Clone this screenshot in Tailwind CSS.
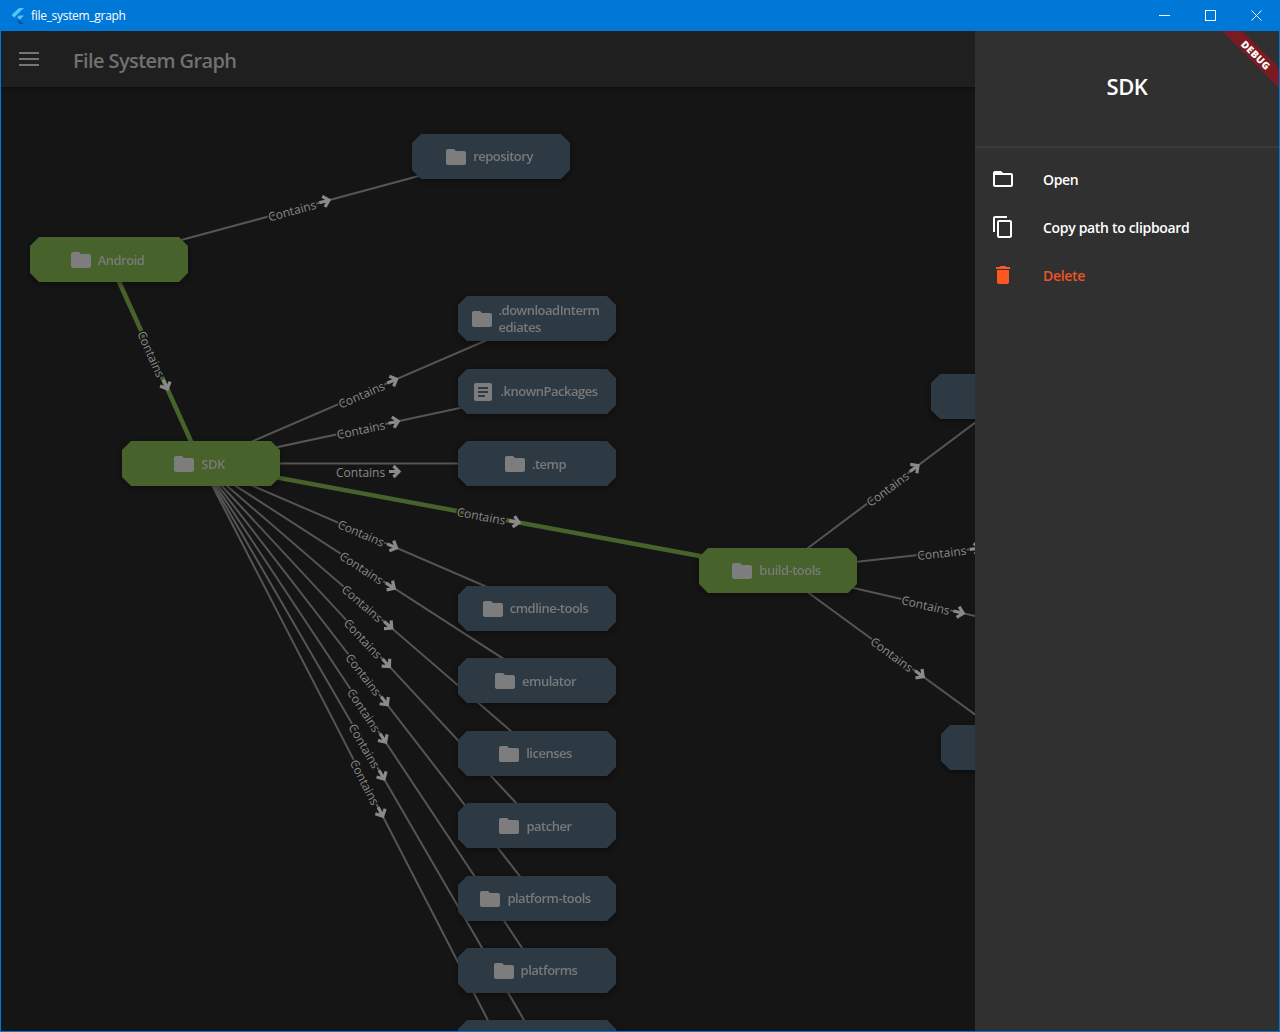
<!doctype html>
<html lang="en">
<head>
  <meta charset="UTF-8" />
  <title>file_system_graph</title>
  <script src="https://cdn.jsdelivr.net/npm/@tailwindcss/browser@4"></script>
</head>
<body class="h-[1032px] w-[1280px] overflow-hidden bg-[#0078d7] font-['Open_Sans','Noto_Sans',sans-serif]">
  <div class="flex h-full flex-col">

    <!-- Title bar -->
    <div class="flex h-[31px] shrink-0 items-center text-white">
      <svg class="ml-[10px] h-4 w-4" viewBox="0 0 16 16">
        <path d="M9 0h5L4.2 9.4 1.6 6.9z" fill="#54c5f8" />
        <path d="M9 7.5h5L9.5 12 7 9.5z" fill="#54c5f8" />
        <path d="M7 9.5 9.5 12 14 16H9z" fill="#01579b" />
      </svg>
      <span class="ml-[5px] text-[12px] tracking-[-0.3px]">file_system_graph</span>
      <div class="ml-auto flex items-center">
        <svg class="mr-[35px] h-[11px] w-[11px]" viewBox="0 0 11 11"><path d="M0 5.5h11" stroke="white" /></svg>
        <svg class="mr-[35px] h-[11px] w-[11px]" viewBox="0 0 11 11"><rect x=".5" y=".5" width="10" height="10" fill="none" stroke="white" /></svg>
        <svg class="mr-[18px] h-[11px] w-[11px]" viewBox="0 0 11 11"><path d="M.5.5l10 10M10.5.5l-10 10" stroke="white" /></svg>
      </div>
    </div>

    <div class="flex min-h-0 flex-1 pb-px pl-px pr-px">
      <!-- App bar and graph, dimmed by the open drawer -->
      <div class="relative flex w-[974px] shrink-0 flex-col overflow-hidden bg-[#151515]">
        <div class="relative z-10 flex h-14 shrink-0 items-center bg-[#1f1f1f] shadow-[0_2px_4px_rgba(0,0,0,0.3)]">
          <svg class="ml-[18px] h-[20px] w-[20px]" viewBox="0 0 20 20">
            <path d="M0 3h20v2H0zM0 9h20v2H0zM0 15h20v2H0z" fill="#757575" />
          </svg>
          <span class="ml-[34px] pt-[3px] text-[20px] font-semibold tracking-[-0.6px] text-[#717171]">File System Graph</span>
        </div>
        <div id="graph" class="relative flex-1"></div>
      </div>

      <!-- Drawer -->
      <div class="relative flex-1 overflow-hidden bg-[#303030] text-white">
        <div class="flex h-[117px] items-center justify-center border-b-2 border-[#3b3b3b] pb-[5px] text-[22px] font-semibold tracking-[-0.5px]">SDK</div>
        <ul class="pt-[7px] text-[14px] font-semibold tracking-[-0.32px]">
          <li class="flex h-12 items-center">
            <svg class="ml-[16px] h-6 w-6" viewBox="0 0 24 24" fill="white"><path d="M20 6h-8l-2-2H4c-1.1 0-2 .9-2 2v12c0 1.1.9 2 2 2h16c1.1 0 2-.9 2-2V8c0-1.1-.9-2-2-2zm0 12H4V8h16v10z" /></svg>
            <span class="ml-[28px]">Open</span>
          </li>
          <li class="flex h-12 items-center">
            <svg class="ml-[16px] h-6 w-6" viewBox="0 0 24 24" fill="white"><path d="M16 1H4c-1.1 0-2 .9-2 2v14h2V3h12V1zm3 4H8c-1.1 0-2 .9-2 2v14c0 1.1.9 2 2 2h11c1.1 0 2-.9 2-2V7c0-1.1-.9-2-2-2zm0 16H8V7h11v14z" /></svg>
            <span class="ml-[28px]">Copy path to clipboard</span>
          </li>
          <li class="flex h-12 items-center text-[#ea5527]">
            <svg class="ml-[16px] h-6 w-6" viewBox="0 0 24 24" fill="#ff5722"><path d="M6 19c0 1.1.9 2 2 2h8c1.1 0 2-.9 2-2V7H6v12zM19 4h-3.5l-1-1h-5l-1 1H5v2h14V4z" /></svg>
            <span class="ml-[28px]">Delete</span>
          </li>
        </ul>
        <!-- Debug ribbon -->
        <div class="absolute right-[-27px] top-[17px] flex h-[14px] w-[100px] rotate-45 items-center justify-center bg-[#7c1a22] text-[10px] font-extrabold tracking-[0.4px] text-white">DEBUG</div>
      </div>
    </div>
  </div>

  <script>
    // screen coordinates of the graph area
    const originX = 1;
    const originY = 87;
    const nodeW = 158;
    const nodeH = 45;

    const nodes = {
      repository: { x: 412, y: 134, label: "repository" },
      android: { x: 30, y: 237, label: "Android", green: true, low: true },
      sdk: { x: 122, y: 441, label: "SDK", green: true, low: true },
      download: { x: 458, y: 296, label: ".downloadInterm<br>ediates" },
      known: { x: 458, y: 369, label: ".knownPackages", file: true },
      temp: { x: 458, y: 441, label: ".temp", low: true },
      cmdline: { x: 458, y: 586, label: "cmdline-tools" },
      emulator: { x: 458, y: 658, label: "emulator", low: true },
      licenses: { x: 458, y: 731, label: "licenses" },
      patcher: { x: 458, y: 803, label: "patcher", low: true },
      platformTools: { x: 458, y: 876, label: "platform-tools" },
      platforms: { x: 458, y: 948, label: "platforms" },
      next1: { x: 458, y: 1020, label: "" },
      next2: { x: 458, y: 1093, label: "" },
      buildTools: { x: 699, y: 548, label: "build-tools", green: true },
      v1: { x: 931, y: 374, label: "" },
      v2: { x: 1043, y: 510, label: "" },
      v3: { x: 1011, y: 620, label: "" },
      v4: { x: 941, y: 725, label: "" },
    };

    const edges = [
      ["android", "repository"],
      ["android", "sdk", true],
      ["sdk", "download"],
      ["sdk", "known"],
      ["sdk", "temp"],
      ["sdk", "cmdline"],
      ["sdk", "emulator"],
      ["sdk", "licenses"],
      ["sdk", "patcher"],
      ["sdk", "platformTools"],
      ["sdk", "platforms"],
      ["sdk", "next1"],
      ["sdk", "next2"],
      ["sdk", "buildTools", true],
      ["buildTools", "v1"],
      ["buildTools", "v2"],
      ["buildTools", "v3"],
      ["buildTools", "v4"],
    ];

    const folderIcon = `<svg class="h-6 w-6 shrink-0" viewBox="0 0 24 24" fill="#7d7d7d"><path d="M10 4H4c-1.1 0-2 .9-2 2v12c0 1.1.9 2 2 2h16c1.1 0 2-.9 2-2V8c0-1.1-.9-2-2-2h-8l-2-2z"/></svg>`;
    const fileIcon = `<svg class="h-6 w-6 shrink-0" viewBox="0 0 24 24" fill="#7d7d7d"><path d="M19 3H5c-1.1 0-2 .9-2 2v14c0 1.1.9 2 2 2h14c1.1 0 2-.9 2-2V5c0-1.1-.9-2-2-2zm-5 14H7v-2h7v2zm3-4H7v-2h10v2zm0-4H7V7h10v2z"/></svg>`;

    // edges first so they sit behind the nodes
    let lines = "";
    let labels = "";
    edges.forEach(([from, to, green]) => {
      const a = nodes[from];
      const b = nodes[to];
      const x1 = a.x + nodeW / 2;
      const y1 = a.y + nodeH / 2;
      const x2 = b.x + nodeW / 2;
      const y2 = b.y + nodeH / 2;
      const mx = (x1 + x2) / 2;
      const my = (y1 + y2) / 2;
      const angle = Math.atan2(y2 - y1, x2 - x1) * 180 / Math.PI;
      const drop = y1 === y2 ? 8 : 0;

      lines += `<line x1="${x1}" y1="${y1}" x2="${x2}" y2="${y2}" stroke="${green ? "#47622a" : "#555555"}" stroke-width="${green ? 4.5 : 2}" />`;
      labels += `<g transform="translate(${mx} ${my + drop}) rotate(${angle})">
        <text x="-33" y="5" font-size="12" fill="#8a8a8a" stroke="#151515" stroke-width="3" paint-order="stroke">Contains</text>
        <path d="M20 0h10M24.5-5.5 30 0l-5.5 5.5" fill="none" stroke="#8a8a8a" stroke-width="3.2" />
      </g>`;
    });

    const graph = document.getElementById("graph");
    graph.innerHTML = `<svg class="absolute left-0 top-0 h-[945px] w-[974px]" viewBox="${originX} ${originY} 974 945">${lines}${labels}</svg>`;

    Object.values(nodes).forEach(node => {
      graph.innerHTML += `
        <div class="absolute drop-shadow-[0_2px_3px_rgba(0,0,0,0.4)]" style="left:${node.x - originX}px;top:${node.y - originY}px">
          <div class="${node.green ? "bg-[#47622a]" : "bg-[#2d3a43]"} flex h-[45px] w-[158px] items-center justify-center gap-[5px] pl-3 pr-[17px] text-[13px] font-semibold leading-[17px] tracking-[-0.5px] text-[#797979] [clip-path:polygon(9px_0,149px_0,158px_9px,158px_36px,149px_45px,9px_45px,0_36px,0_9px)]">
            ${node.label ? (node.file ? fileIcon : folderIcon) + `<span class="${node.low ? "pt-[2px]" : ""}">${node.label}</span>` : ""}
          </div>
        </div>`;
    });
  </script>
</body>
</html>
